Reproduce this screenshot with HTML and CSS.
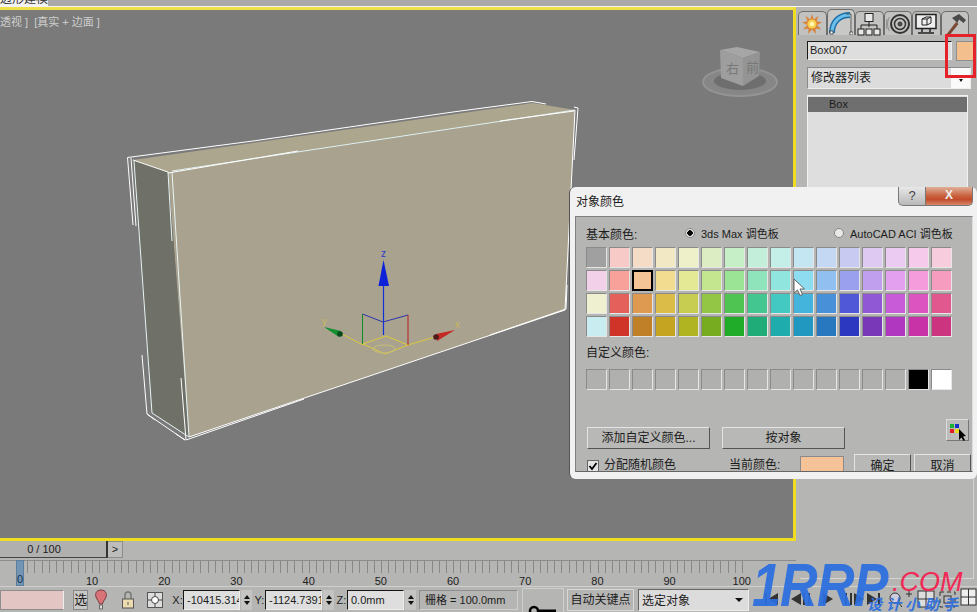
FILE: index.html
```html
<!DOCTYPE html>
<html lang="zh">
<head>
<meta charset="utf-8">
<title>3ds Max 对象颜色</title>
<link rel="stylesheet" href="styles.css">
</head>
<body>
<div class="app">
  <div class="topstrip"><div class="doctab"><span>多边形建模</span></div></div>
  <div class="main">
    <div class="viewport">
      <div class="vplabel">透视 ]&nbsp; [真实 + 边面 ]</div>
      <svg class="scene" viewBox="0 0 793 530" width="793" height="530">
        <g transform="translate(0,-10)">
          <polygon points="133,160 533,103 575,110 168,172" fill="#aca68f"/>
          <polygon points="168,172 575,110 565,310 189,437" fill="#a9a28f"/>
          <polygon points="133,160 168,172 189,437 152,413" fill="#6f7068"/>
          <g fill="none" stroke="#fff" stroke-width="1">
            <path d="M127.5 157.5 L253 141 M253 141 L453 112 L532 101.500 L546 104"/>
            <path d="M127.500 157.500 L133 225 M131 158 L136 226"/>
            <path d="M134 161 L152 413 L189 437" stroke="#e8f4f4"/>
            <path d="M133 160 L168 172"/>
            <path d="M168 172 L172 241 M172 172 L189 437" stroke="#e8f6f6"/>
            <path d="M172 171 L575 110" stroke="#dff2f2"/>
            <path d="M168 173 L298 151 M500 121 L574 111"/>
            <path d="M578 108 L574 160 M574 107 L578 108 M575 110 L565 310"/>
            <path d="M567 285 L566 309 L490 335"/>
            <path d="M189 437 L565 310"/>
            <path d="M186 440 L304 399"/>
            <path d="M142 355 L147 414 L185 440 L176 434 M147 414 L155 420"/>
            <path d="M181 378 L186 440"/>
          </g>
          <g fill="none">
            <path d="M340 333 L363 345 M408 345 L435 337" stroke="#d8c83c"/>
            <path d="M363 344 L386 336 L408 345 L385 354 Z" stroke="#dccb3e"/>
            <ellipse cx="384" cy="349" rx="11" ry="4" stroke="#c8bf78"/>
            <path d="M383.500 286 V335" stroke="#1230d8" stroke-width="1.200"/>
            <path d="M362.500 314 L383 322 L408 315" stroke="#2b35a8"/>
            <path d="M362.500 314 V344" stroke="#128a26"/>
            <path d="M408 315 V345" stroke="#b81c1c"/>
          </g>
          <polygon points="383.500,260 389,286 378.500,286" fill="#0d22d8"/>
          <polygon points="324,327 341,331 339,337" fill="#109030"/>
          <circle cx="340" cy="334" r="2.800" fill="#0c4a1e"/>
          <polygon points="455,330 436,334 437,341" fill="#c42a24"/>
          <circle cx="436" cy="337" r="2.800" fill="#4c1c1c"/>
          <text x="381" y="257" class="axis axis-z">z</text>
          <text x="322" y="325" class="axis axis-y">y</text>
          <text x="455" y="328" class="axis axis-x">x</text>
          <g class="viewcube">
            <ellipse cx="740" cy="82" rx="37" ry="14" fill="#868686"/>
            <ellipse cx="740" cy="82" rx="37" ry="14" fill="none" stroke="#949494" stroke-width="2"/>
            <ellipse cx="740" cy="81" rx="26" ry="9" fill="#6e6e6e"/>
            <polygon points="720,50 737,47 760,52 743,58" fill="#a6a6a6"/>
            <polygon points="720,50 743,58 743,86 721,78" fill="#9e9e9e"/>
            <polygon points="743,58 760,52 759,76 743,86" fill="#949494"/>
            <text x="726" y="73" class="cubetext">右</text>
            <text x="746" y="72" class="cubetext">前</text>
          </g>
        </g>
      </svg>
    </div>
    <aside class="panel">
      <div class="tabs">
        <div class="tab">
          <svg viewBox="0 0 24 24" width="22" height="22"><polygon points="12,1 14,7 19,3 17,9 23,10 17.500,13 22,18 16,17 16,23 12,18 8,23 8,17 2,18 7,13 1,10 7,9 5,3 10,7" fill="#d8843c"/><circle cx="12" cy="12" r="5" fill="#f8d050"/><circle cx="12" cy="12" r="2.500" fill="#fff6b0"/></svg>
        </div>
        <div class="tab tab-active">
          <svg viewBox="0 0 24 24" width="24" height="24"><path d="M3 22 C3 11 10 4 21 4" fill="none" stroke="#1c6ca8" stroke-width="6"/><path d="M3 22 C3 11 10 4 21 4" fill="none" stroke="#6cc0e8" stroke-width="3"/><rect x="1" y="20" width="3" height="3" fill="#fff" stroke="#222" stroke-width=".7"/><rect x="21" y="21" width="3" height="3" fill="#fff" stroke="#222" stroke-width=".7"/><path d="M17 3 H22 V21" fill="none" stroke="#333" stroke-width=".7"/></svg>
        </div>
        <div class="tab">
          <svg viewBox="0 0 24 24" width="24" height="24" fill="#e8e8e8" stroke="#222" stroke-width="1"><rect x="8" y="1.500" width="8" height="8"/><path d="M12 9.500 V15 M4 18 V13 H20 V18" fill="none"/><rect x="1" y="17" width="6" height="6"/><rect x="9" y="17" width="6" height="6"/><rect x="17" y="17" width="6" height="6"/></svg>
        </div>
        <div class="tab">
          <svg viewBox="0 0 24 24" width="24" height="24" fill="none" stroke="#333"><circle cx="14" cy="12" r="9" stroke-width="2"/><circle cx="14" cy="12" r="5.500" stroke-width="1.500"/><circle cx="14" cy="12" r="2" fill="#555"/><path d="M3.500 5 C1 9 1 15 3.500 19 M1 7 C0 10 0 14 1 17" stroke="#888"/></svg>
        </div>
        <div class="tab">
          <svg viewBox="0 0 24 24" width="24" height="24" fill="none" stroke="#222"><rect x="2" y="2.500" width="20" height="14" fill="#eee" stroke-width="1.500"/><path d="M8 17 V20 M16 17 V20 M4 21 H20" stroke-width="1.500"/><path d="M8 7 L12 5 H17 V11 L13 13 H8 Z M8 7 H13 V13 M13 7 L17 5"/></svg>
        </div>
        <div class="tab">
          <svg viewBox="0 0 24 24" width="24" height="24"><path d="M3 23 L13 10 L15.500 12 L5.500 24.500 Z" fill="#7a4a34"/><path d="M9 6 L16 2 L23 8 L20.500 11 L16 7.500 L14.500 11 Z" fill="#4a4a4a"/></svg>
        </div>
      </div>
      <div class="namerow">
        <div class="nameinput">Box007</div>
        <div class="objcolor"></div>
      </div>
      <div class="modlist">
        <span>修改器列表</span>
        <div class="modarrow"><i class="caret caret-small"></i></div>
      </div>
      <div class="stack">
        <div class="stackitem">Box</div>
      </div>
      <div class="redmark"></div>
    </aside>
  </div>
  <div class="scrollrow">
    <div class="slider">0 / 100</div>
    <div class="slidernext">&gt;</div>
  </div>
  <div class="ruler">
    <div class="ticks"></div>
    <div class="thumb">0</div>
    <div class="rulerlabels">
      <span>10</span><span>20</span><span>30</span><span>40</span><span>50</span><span>60</span><span>70</span><span>80</span><span>90</span><span>100</span>
    </div>
  </div>
  <div class="status">
    <div class="pinkbox"></div>
    <div class="sbtn">选</div>
    <div class="sicon">
      <svg viewBox="0 0 16 22" width="16" height="22"><path d="M8 1 C3 1 2 5 3 8 C4 11 6 12 6.500 15 H9.500 C10 12 12 11 13 8 C14 5 13 1 8 1 Z" fill="#d87478" stroke="#7a3a3c"/><path d="M6.500 16 H9.500 V20 H6.500 Z" fill="#ddd" stroke="#666"/></svg>
    </div>
    <div class="sicon">
      <svg viewBox="0 0 16 22" width="16" height="22"><path d="M5 11 V6 C5 2 11 2 11 6 V11" fill="none" stroke="#777" stroke-width="1.500"/><rect x="2.500" y="10" width="11" height="9" fill="#ecdcb0" stroke="#555"/><path d="M8 13 V16" stroke="#555"/></svg>
    </div>
    <div class="sicon">
      <svg viewBox="0 0 18 18" width="18" height="18"><rect x="1.500" y="1.500" width="15" height="15" fill="#ddd" stroke="#555"/><circle cx="9" cy="9" r="3.500" fill="#fff" stroke="#444"/><path d="M9 2 V5 M9 13 V16 M2 9 H5 M13 9 H16" stroke="#444"/></svg>
    </div>
    <span class="coordlabel coord-x">X:</span>
    <div class="coord">-10415.314</div>
    <div class="spin"><i></i><b></b></div>
    <span class="coordlabel">Y:</span>
    <div class="coord">-1124.7391</div>
    <div class="spin"><i></i><b></b></div>
    <span class="coordlabel">Z:</span>
    <div class="coord">0.0mm</div>
    <div class="spin spin-wide"><i></i><b></b></div>
    <div class="gridbox">栅格 = 100.0mm</div>
    <div class="keybox">
      <svg class="keyicon" viewBox="0 0 30 12" width="30" height="12"><circle cx="6" cy="6" r="4" fill="none" stroke="#000" stroke-width="2.500"/><path d="M10 4.500 H28 V9 H10 Z" fill="#000"/></svg>
    </div>
    <div class="autokey">自动关键点</div>
    <div class="seldrop"><span>选定对象</span><i class="caret"></i></div>
    <div class="playback">
      <svg viewBox="0 0 120 14" width="120" height="14" fill="#333"><path d="M4 1 V13 H6 V1 Z M17 1 L7 7 L17 13 Z"/><path d="M40 1 L30 7 L40 13 Z M42 1 V13 H44 V1 Z M47 1 V13 H49 V1 Z"/><path d="M62 1 V13 L72 7 Z"/><path d="M84 1 V13 H86 V1 Z M89 1 V13 H91 V1 Z M93 1 V13 L103 7 Z"/><path d="M106 1 V13 L116 7 Z M117 1 V13 H119 V1 Z"/></svg>
    </div>
    <div class="navicons">
      <svg viewBox="0 0 90 22" width="90" height="22" fill="none" stroke="#333"><circle cx="8" cy="10" r="5" fill="#ccd" /><path d="M11 14 L15 19 M19 6 H25 M22 3 V9"/><rect x="31" y="3" width="16" height="16" fill="#ddd"/><path d="M39 3 V19 M31 11 H47"/><rect x="53" y="4" width="15" height="15" stroke-dasharray="4 3"/><rect x="57" y="8" width="7" height="7" fill="#bbb"/><rect x="74" y="1" width="15" height="16" fill="#eee"/><path d="M81.500 1 V17 M74 9 H89"/></svg>
    </div>
  </div>

  <div class="panelframe"></div>

  <div class="dialog">
    <div class="dtitle">
      <span>对象颜色</span>
      <div class="dctrls">
        <div class="dhelp">?</div>
        <div class="dclose">X</div>
      </div>
    </div>
    <div class="dbody">
      <div class="palrow">
        <span class="pallabel">基本颜色:</span>
        <span class="radio radio-on"></span><span class="radiotext radiotext-a">3ds Max 调色板</span>
        <span class="radio radio-off"></span><span class="radiotext">AutoCAD ACI 调色板</span>
      </div>
      <div class="swatches">
        <i style="background:#a0a0a0"></i><i style="background:#f7c9c7"></i><i style="background:#f5dcc6"></i><i style="background:#f3e8c4"></i><i style="background:#eef0c9"></i><i style="background:#dcedc4"></i><i style="background:#c6eec7"></i><i style="background:#c3eed9"></i><i style="background:#c4eee8"></i><i style="background:#c4e6f2"></i><i style="background:#c5d8f3"></i><i style="background:#c8caf1"></i><i style="background:#dec9f3"></i><i style="background:#eccbf2"></i><i style="background:#f6caea"></i><i style="background:#f7ccdc"></i>
        <i style="background:#f3d0ea"></i><i style="background:#f8a09a"></i><i class="picked" style="background:#f5c496"></i><i style="background:#f2dc90"></i><i style="background:#e4e995"></i><i style="background:#c3e68f"></i><i style="background:#9be496"></i><i style="background:#90e4bc"></i><i style="background:#90e6de"></i><i style="background:#8edcf0"></i><i style="background:#90bff0"></i><i style="background:#9a9fee"></i><i style="background:#c09fee"></i><i style="background:#e2a0ee"></i><i style="background:#f59cdd"></i><i style="background:#f69cbe"></i>
        <i style="background:#eef0cf"></i><i style="background:#e4605a"></i><i style="background:#de9a50"></i><i style="background:#dcbc48"></i><i style="background:#c6cd50"></i><i style="background:#92c644"></i><i style="background:#4fc452"></i><i style="background:#44c690"></i><i style="background:#44c8c2"></i><i style="background:#44b4dc"></i><i style="background:#4890d8"></i><i style="background:#5058d8"></i><i style="background:#9058d4"></i><i style="background:#c85cd8"></i><i style="background:#dc54c0"></i><i style="background:#e0588e"></i>
        <i style="background:#c8ecf0"></i><i style="background:#d03428"></i><i style="background:#c08028"></i><i style="background:#c4a420"></i><i style="background:#b0b420"></i><i style="background:#78ac20"></i><i style="background:#20ac28"></i><i style="background:#20ac78"></i><i style="background:#1eacac"></i><i style="background:#2098c0"></i><i style="background:#2878c0"></i><i style="background:#2c38c0"></i><i style="background:#7838b8"></i><i style="background:#b038c0"></i><i style="background:#c834a8"></i><i style="background:#cc3480"></i>
      </div>
      <div class="customlabel">自定义颜色:</div>
      <div class="swatches">
        <i></i><i></i><i></i><i></i><i></i><i></i><i></i><i></i><i></i><i></i><i></i><i></i><i></i><i></i><i style="background:#000"></i><i style="background:#fff"></i>
      </div>
      <div class="actions">
        <div class="btn btn-wide">添加自定义颜色...</div>
        <div class="btn btn-wide">按对象</div>
        <div class="picker">
          <svg viewBox="0 0 22 22" width="22" height="22"><rect x="3" y="4" width="4" height="4" fill="#18b030"/><rect x="8" y="4" width="4" height="4" fill="#1830c8"/><rect x="3" y="9" width="4" height="4" fill="#e02020"/><rect x="8" y="9" width="4" height="4" fill="#e8d820"/><path d="M12 9 V20 L14.500 17.500 L16.500 21 L18 20 L16 16.500 L19 16 Z" fill="#000"/></svg>
        </div>
      </div>
      <div class="bottomrow">
        <span class="check">
          <svg viewBox="0 0 10 10" width="10" height="10"><path d="M1.500 5 L4 8 L8.500 2" fill="none" stroke="#000" stroke-width="1.800"/></svg>
        </span>
        <span class="checktext">分配随机颜色</span>
        <span class="curlabel">当前颜色:</span>
        <div class="curcolor"></div>
        <div class="btn btn-ok">确定</div>
        <div class="btn btn-cancel">取消</div>
      </div>
    </div>
  </div>

  <svg class="cursor" viewBox="0 0 13 19" width="13" height="19"><path d="M1 1 V15 L4.500 12 L7 17.500 L9.500 16.500 L7 11 L11.500 11 Z" fill="#fff" stroke="#666"/></svg>

  <div class="logo">
    <span class="logo-main">1RRP</span><span class="logo-com">.COM</span>
    <span class="logo-sub">设计小助手</span>
  </div>
</div>
</body>
</html>
```
FILE: styles.css
```css
* { box-sizing: border-box; }
html, body { margin: 0; padding: 0; }
body { background: #b4b4b2; }
i, b { display: block; font-style: normal; }

.app {
  position: relative;
  width: 977px;
  height: 612px;
  overflow: hidden;
  background: #b5b5b3;
  font-family: "Liberation Sans", "Noto Sans CJK SC", sans-serif;
  font-size: 11px;
  color: #1c1c1c;
  display: flex;
  flex-direction: column;
}

/* top strip */
.topstrip {
  height: 7px;
  flex: none;
  background: #a9a9a9;
  border-bottom: 1px solid #f4f4f4;
}
.doctab {
  width: 48px;
  height: 6px;
  background: #f2f2f2;
  overflow: hidden;
  white-space: nowrap;
  font-size: 12px;
  line-height: 1;
}
.doctab span { display: block; margin: -7px 0 0 -12px; color: #333; }

.main { display: flex; height: 534px; flex: none; }

/* viewport */
.viewport {
  position: relative;
  width: 796px;
  flex: none;
  background: #7a7a7a;
  border-top: 3px solid #efe04a;
  border-right: 3px solid #f0dc20;
  border-bottom: 3px solid #f0dc20;
}
.vplabel {
  position: absolute;
  left: 0;
  top: 5px;
  font-size: 11px;
  line-height: 14px;
  color: #cfcfcf;
  white-space: nowrap;
}
.scene { position: absolute; left: 0; top: 0; }
.axis { font: 10px "Liberation Sans", sans-serif; }
.axis-z { fill: #2a3cc8; }
.axis-y, .axis-x { fill: #c9b860; }
.cubetext { font: 13px "Noto Sans CJK SC", sans-serif; fill: #787878; }

/* command panel */
.panel {
  position: relative;
  flex: 1;
  padding: 3px 0 0 11px;
}
.tabs { display: flex; margin-left: -9px; height: 25px; align-items: flex-end; }
.tab {
  width: 28.500px;
  height: 24px;
  flex: none;
  display: flex;
  align-items: center;
  justify-content: center;
  background: #c2c2c0;
  border: 1px solid #6e6e6e;
  border-bottom: 0;
  border-radius: 5px 5px 0 0;
}
.tab-active { height: 26px; background: #c8c8c6; }

.namerow { display: flex; margin-top: 6px; height: 19px; }
.nameinput {
  width: 145px;
  height: 19px;
  padding-left: 2px;
  background: #dedede;
  border: 1px solid #1a1a1a;
  border-right-color: #eee;
  border-bottom-color: #eee;
  font-size: 11px;
  line-height: 17px;
}
.objcolor {
  width: 18px;
  height: 20px;
  margin-left: 4px;
  background: #f3bf8d;
  border: 1px solid #8f8f8f;
}
.modlist {
  display: flex;
  justify-content: space-between;
  margin-top: 7px;
  width: 164px;
  height: 22px;
  padding-left: 3px;
  background: #dcdcdc;
  border: 1px solid #8a8a8a;
  border-right-color: #eee;
  border-bottom-color: #eee;
  font-size: 12px;
  line-height: 20px;
}
.modarrow {
  width: 19px;
  background: #fafafa;
  display: flex;
  align-items: flex-end;
  justify-content: center;
  padding-bottom: 6px;
}
.caret {
  width: 0;
  height: 0;
  border: 4px solid transparent;
  border-top: 4px solid #111;
  border-bottom: 0;
}
.caret-small { border-width: 3px 2px 0; }
.stack {
  margin-top: 6px;
  width: 161px;
  height: 100px;
  padding: 1px 0 0;
  background: #dedede;
  border: 1px solid #f2f2f2;
}
.stackitem {
  height: 15px;
  padding-left: 21px;
  background: #6f6f6f;
  font-size: 11px;
  line-height: 15px;
  color: #1c1c1c;
}
.redmark {
  position: absolute;
  left: 149px;
  top: 27px;
  width: 31px;
  height: 44px;
  border: 3px solid #e5222a;
}

/* time slider */
.scrollrow { display: flex; height: 17px; flex: none; }
.slider {
  width: 108px;
  height: 17px;
  padding-right: 18px;
  background: #b0b0ae;
  border-right: 2px solid #333;
  border-bottom: 1px solid #444;
  text-align: center;
  font-size: 11px;
  line-height: 16px;
}
.slidernext {
  width: 15px;
  height: 17px;
  background: #bdbdbb;
  border: 1px solid #8e8e8e;
  border-left: 0;
  text-align: center;
  font-size: 11px;
  line-height: 15px;
}

.ruler {
  position: relative;
  height: 29px;
  flex: none;
  border-bottom: 1px solid #d0d0ce;
}
.ticks {
  height: 15px;
  margin-top: 2px;
  width: 796px;
  border-top: 1px solid #8c8c8c;
  background: linear-gradient(#b5b5b3 12px, transparent 12px) right / 51px 100% no-repeat,
    repeating-linear-gradient(90deg, #888 0 1px, transparent 1px 7.220px) 20px 0 / 725px 12px no-repeat;
}
.thumb {
  position: absolute;
  left: 16px;
  top: 2px;
  width: 8px;
  height: 26px;
  padding-top: 12px;
  background: #7295b6;
  border: 1px solid #5d7e9c;
  font-size: 11px;
  line-height: 13px;
  text-align: center;
  color: #1c3048;
}
.rulerlabels { display: flex; padding-left: 56px; height: 12px; }
.rulerlabels span { width: 72.200px; flex: none; text-align: center; font-size: 11px; line-height: 12px; color: #222; }

/* status */
.status { display: flex; align-items: center; height: 25px; flex: none; }
.pinkbox {
  width: 65px;
  height: 20px;
  margin-right: 9px;
  background: #e3c6c3;
  border: 1px solid #8e8e8e;
  border-right-color: #eee;
}
.sbtn {
  width: 15px;
  height: 20px;
  background: #c8c8c6;
  border: 1px solid #888;
  overflow: hidden;
  font-size: 13px;
  line-height: 18px;
}
.sicon { width: 27px; display: flex; justify-content: center; }
.coordlabel { width: 11px; font-size: 11px; text-align: center; flex: none; }
.coord-x { margin-left: 4px; }
.coord {
  width: 57px;
  height: 20px;
  flex: none;
  overflow: hidden;
  white-space: nowrap;
  padding-left: 3px;
  background: #dedede;
  border: 1px solid #161616;
  border-right-color: #eee;
  border-bottom-color: #eee;
  font-size: 11px;
  line-height: 18px;
}
.spin {
  width: 11px;
  height: 20px;
  flex: none;
  margin: 0 2px 0 1px;
  background: #c4c4c2;
  display: flex;
  flex-direction: column;
  align-items: center;
  justify-content: center;
  gap: 2px;
}
.spin i { width: 0; height: 0; border: 3.500px solid transparent; border-bottom: 4px solid #111; border-top: 0; }
.spin b { width: 0; height: 0; border: 3.500px solid transparent; border-top: 4px solid #111; border-bottom: 0; }
.spin-wide { margin-right: 3px; }
.gridbox {
  width: 99px;
  height: 20px;
  flex: none;
  padding-left: 5px;
  border: 1px solid #d0d0ce;
  border-left-color: #8e8e8e;
  border-top-color: #8e8e8e;
  font-size: 11px;
  line-height: 18px;
  white-space: nowrap;
}
.keybox {
  width: 42px;
  height: 24px;
  margin: 1px 0 0 4px;
  flex: none;
  border: 1px solid #d0d0ce;
  border-bottom: 0;
  display: flex;
  align-items: flex-end;
  justify-content: center;
  overflow: hidden;
}
.keyicon { margin-bottom: -5px; flex: none; }
.autokey {
  width: 67px;
  height: 22px;
  margin: 0 4px 0 3px;
  flex: none;
  border: 1px solid #d8d8d6;
  font-size: 12px;
  line-height: 20px;
  text-align: center;
  white-space: nowrap;
}
.seldrop {
  width: 111px;
  height: 22px;
  flex: none;
  display: flex;
  align-items: center;
  justify-content: space-between;
  padding: 0 5px 0 3px;
  background: #dcdcdc;
  border: 1px solid #666;
  border-right-color: #eee;
  border-bottom-color: #eee;
  font-size: 12px;
}
.playback { margin-left: 12px; flex: none; width: 120px; }
.navicons { flex: none; margin-left: 6px; }

.panelframe {
  position: absolute;
  left: 800px;
  top: 470px;
  width: 174px;
  height: 109px;
  border-right: 1px solid #d4d4d2;
  border-bottom: 1px solid #d4d4d2;
}

/* dialog */
.dialog {
  position: absolute;
  left: 569px;
  top: 187px;
  width: 408px;
  height: 292px;
  padding: 0 4px 7px 5px;
  background: #f1f1f1;
  border-radius: 6px;
  border-left: 1px solid #555;
  display: flex;
  flex-direction: column;
}
.dtitle {
  height: 29px;
  flex: none;
  display: flex;
  justify-content: space-between;
  align-items: flex-start;
  padding-left: 1px;
  font-size: 12px;
  line-height: 30px;
}
.dctrls { display: flex; }
.dhelp {
  width: 28px;
  height: 19px;
  background: linear-gradient(#e8e8e8, #b8b8b8);
  border: 1px solid #777;
  border-top: 0;
  border-radius: 0 0 0 5px;
  text-align: center;
  font-size: 13px;
  line-height: 17px;
  color: #444;
}
.dclose {
  width: 47px;
  height: 19px;
  background: linear-gradient(#e0b098, #c8603c 50%, #c24c2c 70%, #d88868);
  border: 1px solid #777;
  border-top: 0;
  border-left: 0;
  border-radius: 0 0 5px 0;
  text-align: center;
  font-size: 12px;
  font-weight: bold;
  line-height: 17px;
  color: #eee;
}
.dbody {
  flex: 1;
  min-height: 0;
  padding: 5px 0 0 10px;
  overflow: hidden;
  background: #b5b5b3;
  border: 1px solid #808080;
  border-bottom: 1px solid #666;
  border-right-color: #ddd;
}
.palrow { display: flex; align-items: center; height: 22px; margin-bottom: 3px; font-size: 12px; }
.pallabel { width: 99px; flex: none; }
.radio {
  width: 10px;
  height: 10px;
  flex: none;
  border-radius: 50%;
  background: #e8e8e8;
  border: 1px solid #888;
}
.radio-on { background: radial-gradient(circle, #000 0 2.500px, #e8e8e8 3px); }
.radiotext { margin-left: 6px; font-size: 11px; white-space: nowrap; }
.radiotext-a { width: 133px; flex: none; }
.swatches {
  display: grid;
  grid-template-columns: repeat(16, 21px);
  grid-auto-rows: 21px;
  gap: 2px;
  margin-top: 1px;
}
.swatches i {
  background: #b0b0ae;
  border: 1px solid #8a8a8a;
  border-right-color: #e6e6e6;
  border-bottom-color: #e6e6e6;
}
.swatches .picked { border: 2px solid #000; }
.customlabel { margin-top: 6px; height: 25px; font-size: 12px; line-height: 21px; }
.actions { display: flex; align-items: flex-end; gap: 12px; margin-top: 29px; padding-left: 1px; height: 30px; }
.btn {
  background: #b8b8b6;
  border: 1px solid #8a8a8a;
  border-top-color: #e4e4e4;
  border-left-color: #e4e4e4;
  border-right-color: #555;
  border-bottom-color: #555;
  text-align: center;
  font-size: 12px;
  white-space: nowrap;
}
.btn-wide { width: 123px; height: 22px; line-height: 20px; }
.picker {
  width: 23px;
  height: 22px;
  margin: 0 3px 8px auto;
  background: #bcbcba;
  border: 1px solid #ddd;
  border-right-color: #777;
  border-bottom-color: #777;
}
.bottomrow { display: flex; align-items: flex-start; margin-top: 5px; padding-left: 1px; height: 24px; font-size: 12px; }
.check {
  width: 12px;
  height: 12px;
  flex: none;
  margin-top: 6px;
  background: #e4e4e4;
  border: 1px solid #666;
  display: flex;
}
.checktext { margin: 4px 0 0 5px; width: 125px; flex: none; line-height: 15px; }
.curlabel { margin-top: 4px; width: 71px; flex: none; line-height: 15px; }
.curcolor { width: 44px; height: 24px; margin-top: 2px; flex: none; background: #f5c397; border: 1px solid #8a8a8a; }
.btn-ok { width: 57px; height: 24px; margin-left: 10px; line-height: 22px; flex: none; }
.btn-cancel { width: 57px; height: 24px; margin-left: 3px; line-height: 22px; flex: none; }

.cursor { position: absolute; left: 793px; top: 278px; }

/* watermark */
.logo {
  position: absolute;
  left: 749px;
  top: 555px;
  width: 228px;
  height: 57px;
  white-space: nowrap;
  opacity: .93;
}
.logo-main {
  position: absolute;
  left: 3px;
  top: -2px;
  font: italic bold 62px/64px "Liberation Sans", sans-serif;
  letter-spacing: -1px;
  color: #2c6fe0;
  transform: scaleX(.84);
  transform-origin: left center;
}
.logo-com {
  position: absolute;
  left: 143px;
  top: 11px;
  font: italic 27px/32px "Liberation Sans", sans-serif;
  color: #f5204e;
}
.logo-sub {
  position: absolute;
  left: 118px;
  top: 41px;
  font: bold italic 15px/16px "Noto Sans CJK SC", sans-serif;
  letter-spacing: 4px;
  color: #2c6fe0;
}
```
